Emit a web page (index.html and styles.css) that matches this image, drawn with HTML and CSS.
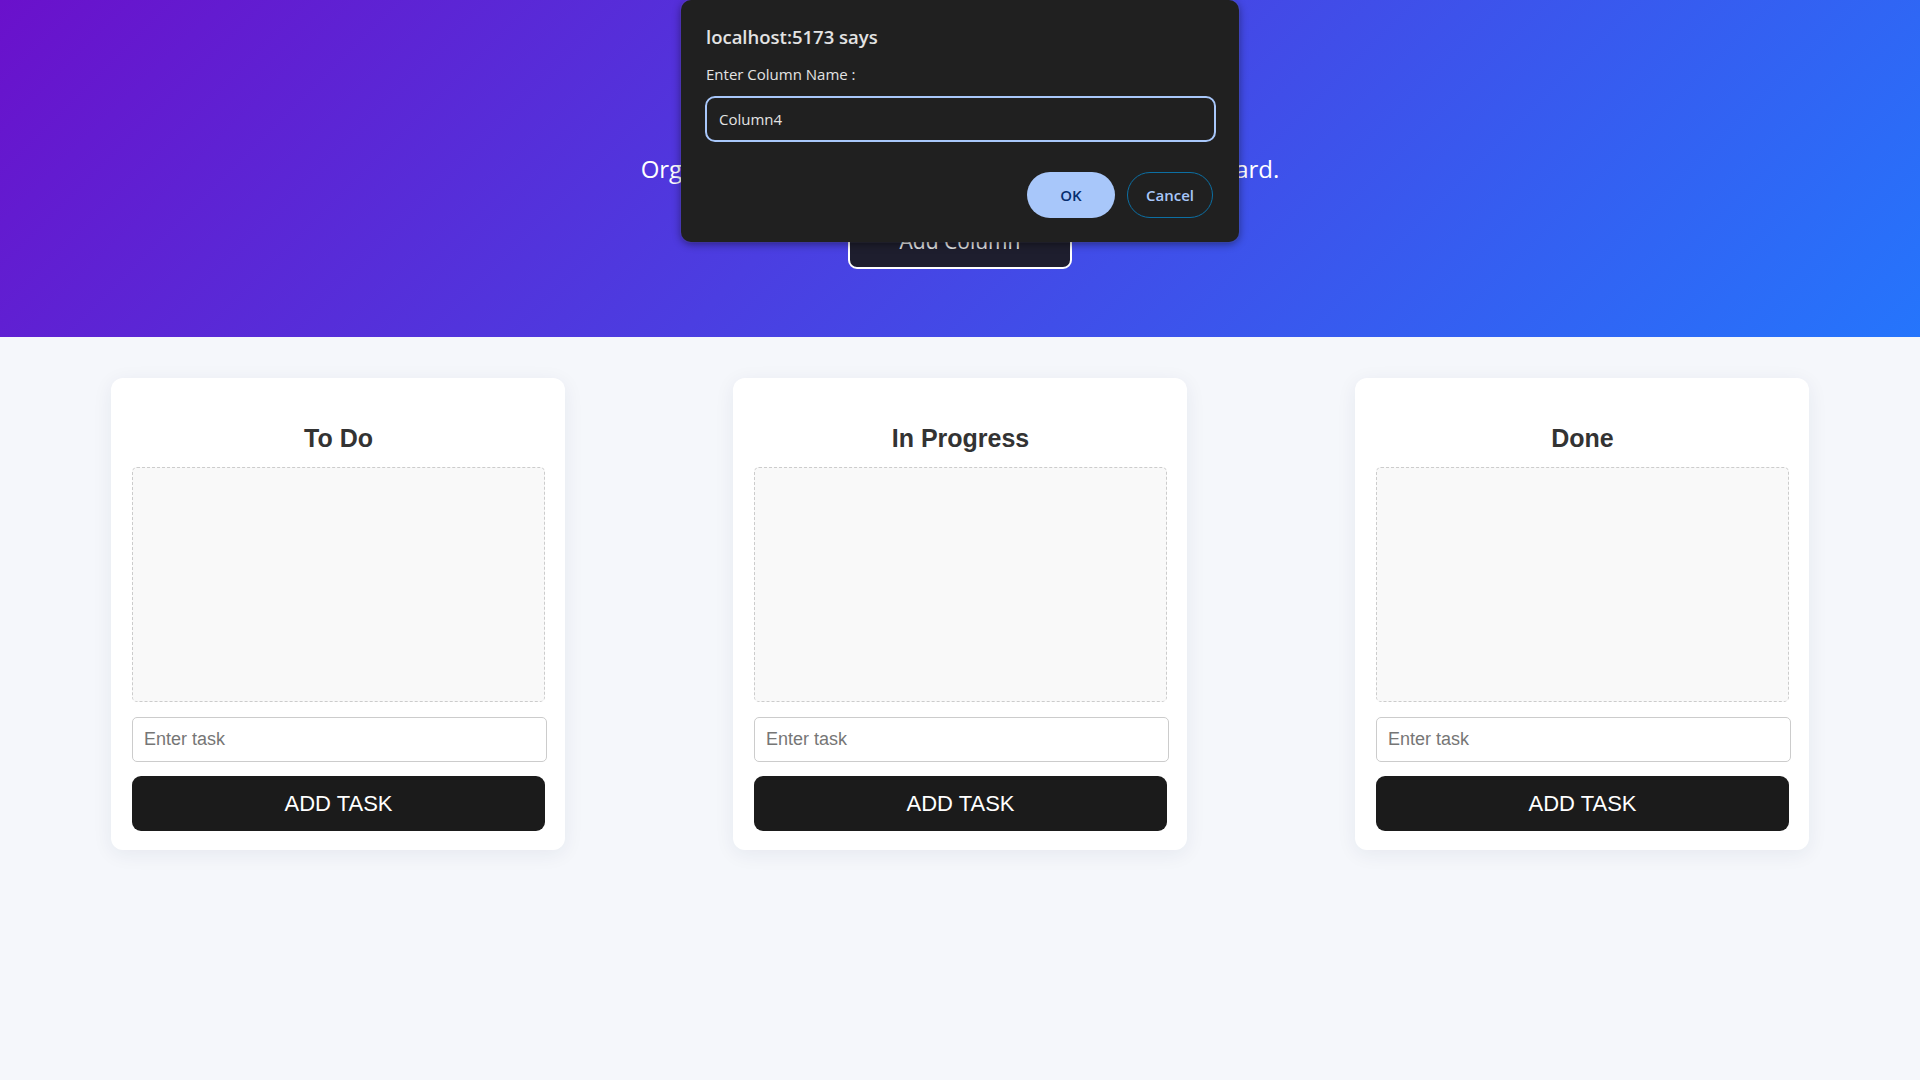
FILE: index.html
```html
<!DOCTYPE html>
<html lang="en">
<head>
<meta charset="utf-8">
<title>Kanban Board</title>
<link rel="stylesheet" href="styles.css">
</head>
<body>
<header class="hero">
  <p class="hero-sub">Organize your tasks and projects with this Kanban board.</p>
  <button class="add-column">Add Column</button>
</header>

<main class="board">
  <section class="column">
    <h2 class="column-title">To Do</h2>
    <div class="dropzone"></div>
    <input class="task-input" type="text" placeholder="Enter task">
    <button class="add-task">ADD TASK</button>
  </section>
  <section class="column">
    <h2 class="column-title">In Progress</h2>
    <div class="dropzone"></div>
    <input class="task-input" type="text" placeholder="Enter task">
    <button class="add-task">ADD TASK</button>
  </section>
  <section class="column">
    <h2 class="column-title">Done</h2>
    <div class="dropzone"></div>
    <input class="task-input" type="text" placeholder="Enter task">
    <button class="add-task">ADD TASK</button>
  </section>
</main>

<div class="prompt" role="dialog">
  <div class="prompt-title">localhost:5173 says</div>
  <div class="prompt-label">Enter Column Name :</div>
  <div class="prompt-field">Column4</div>
  <div class="prompt-actions">
    <button class="prompt-ok">OK</button>
    <button class="prompt-cancel">Cancel</button>
  </div>
</div>
</body>
</html>
```

FILE: styles.css
```css
* { box-sizing: border-box; }

html, body {
  margin: 0;
  padding: 0;
}

body {
  background: #f5f7fb;
  font-family: "Liberation Sans", Arial, sans-serif;
  min-height: 1080px;
}

/* Header */
.hero {
  height: 337px;
  background: linear-gradient(135deg, #6a11cb 0%, #2575fc 100%);
  display: flex;
  flex-direction: column;
  align-items: center;
  padding: 153px 20px 0;
  color: #fff;
  font-family: "Open Sans", "Noto Sans", sans-serif;
}

.hero-sub {
  margin: 0;
  font-size: 24px;
  line-height: 32px;
  white-space: nowrap;
}

.add-column {
  margin-top: 28px;
  width: 224px;
  height: 56px;
  background: #1e1e2e;
  color: #e6e6e6;
  border: 2px solid #ffffff;
  border-radius: 9px;
  font-family: "Open Sans", "Noto Sans", sans-serif;
  font-size: 21px;
}

/* Board */
.board {
  display: flex;
  justify-content: center;
  align-items: flex-start;
  gap: 168px;
  padding-top: 41px;
}

.column {
  width: 454px;
  background: #ffffff;
  border-radius: 12px;
  box-shadow: 0 4px 20px rgba(30, 40, 90, 0.07);
  padding: 20px 20px 19px 21px;
  display: flex;
  flex-direction: column;
}

.column-title {
  margin: 25px 0 14px;
  text-align: center;
  font-size: 25px;
  line-height: 30px;
  font-weight: 700;
  color: #333333;
}

.dropzone {
  height: 235px;
  background: #f9f9f9;
  border: 1px dashed #cccccc;
  border-radius: 5px;
  width: 413px;
}

.task-input {
  margin-top: 15px;
  width: 415px;
  height: 45px;
  border: 1px solid #cccccc;
  border-radius: 5px;
  padding: 0 11px;
  font-family: "Liberation Sans", Arial, sans-serif;
  font-size: 18px;
  color: #333;
  background: #fff;
}

.task-input::placeholder {
  color: #767676;
}

.add-task {
  margin-top: 14px;
  width: 413px;
  height: 55px;
  background: #1b1b1b;
  color: #ffffff;
  border: none;
  border-radius: 9px;
  font-family: "Liberation Sans", Arial, sans-serif;
  font-size: 22px;
}

/* Browser prompt overlay */
.prompt {
  position: absolute;
  left: 681px;
  top: 0;
  width: 558px;
  height: 242px;
  background: #202020;
  border-radius: 10px;
  box-shadow: 0 2px 8px rgba(0, 0, 0, 0.45), 0 0 0 1px rgba(255, 255, 255, 0.06);
  padding: 24px 24px 0 24px;
  font-family: "Open Sans", "Noto Sans", sans-serif;
  color: #e3e3e3;
}

.prompt-title {
  font-size: 18.5px;
  font-weight: 600;
  line-height: 26px;
  margin-left: 1px;
}

.prompt-label {
  margin-top: 13px;
  font-size: 15px;
  line-height: 22px;
  margin-left: 1px;
}

.prompt-field {
  margin-top: 11px;
  height: 46px;
  border: 2px solid #a8c7fa;
  border-radius: 10px;
  padding: 0 12px;
  display: flex;
  align-items: center;
  font-size: 15px;
  color: #e3e3e3;
  width: 511px;
}

.prompt-actions {
  display: flex;
  justify-content: flex-end;
  gap: 12px;
  margin-top: 30px;
  padding-right: 2px;
}

.prompt-ok,
.prompt-cancel {
  height: 46px;
  border-radius: 23px;
  font-family: "Open Sans", "Noto Sans", sans-serif;
  font-size: 15px;
  font-weight: 600;
}

.prompt-ok {
  width: 88px;
  background: #a8c7fa;
  color: #062e6f;
  border: none;
}

.prompt-cancel {
  width: 86px;
  background: transparent;
  color: #a8c7fa;
  border: 1px solid #0c6fa3;
}
```
